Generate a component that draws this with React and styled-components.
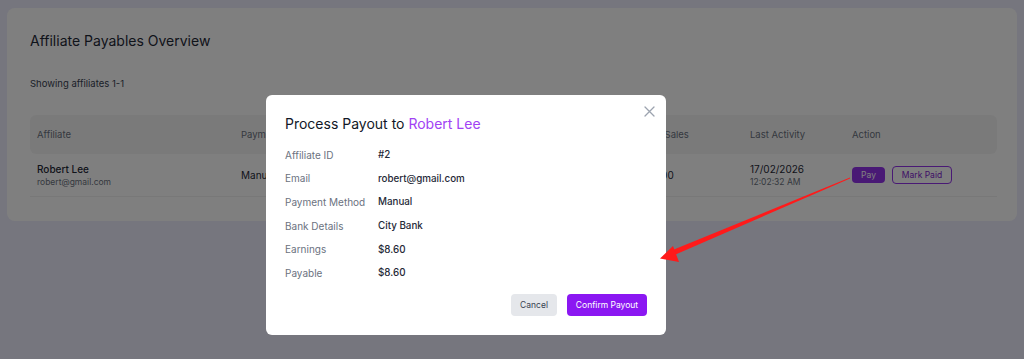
import React from "react";
import styled, { createGlobalStyle } from "styled-components";

const GlobalStyle = createGlobalStyle`
  html, body {
    margin: 0;
    padding: 0;
    background: #ededfd;
    font-family: Inter, "Noto Sans", "Liberation Sans", sans-serif;
    color: #1f2937;
  }
  * { box-sizing: border-box; }
`;

const columns = ["Affiliate", "Payment Method", "Earnings", "Payable", "Total Sales", "Last Activity", "Action"];

const details = [
  ["Affiliate ID", "#2"],
  ["Email", "robert@gmail.com"],
  ["Payment Method", "Manual"],
  ["Bank Details", "City Bank"],
  ["Earnings", "$8.60"],
  ["Payable", "$8.60"],
];

const App = () => {
  return (
    <Page>
      <GlobalStyle />
      <Card>
        <Title>Affiliate Payables Overview</Title>
        <Showing>Showing affiliates 1-1</Showing>
        <Table>
          <HeadRow>
            {columns.map((c) => (
              <HeadCell key={c}>{c}</HeadCell>
            ))}
          </HeadRow>
          <BodyRow>
            <Cell>
              <Name>Robert Lee</Name>
              <Sub>robert@gmail.com</Sub>
            </Cell>
            <Cell>
              <Strong>Manual</Strong>
            </Cell>
            <Cell>
              <Strong>$8.60</Strong>
            </Cell>
            <Cell>
              <Strong>$8.60</Strong>
            </Cell>
            <Cell>
              <Strong>$86.00</Strong>
            </Cell>
            <Cell>
              <Strong>17/02/2026</Strong>
              <Sub>12:02:32 AM</Sub>
            </Cell>
            <Actions>
              <PayButton>Pay</PayButton>
              <OutlineButton>Mark Paid</OutlineButton>
            </Actions>
          </BodyRow>
        </Table>
      </Card>

      <Overlay>
        <Modal>
          <CloseButton aria-label="Close">
            <svg width="11" height="11" viewBox="0 0 11 11">
              <path d="M1 1L10 10M10 1L1 10" stroke="#9ca3af" strokeWidth="1.3" strokeLinecap="round" />
            </svg>
          </CloseButton>
          <ModalTitle>
            Process Payout to <Accent>Robert Lee</Accent>
          </ModalTitle>
          <DetailList>
            {details.map(([label, value]) => (
              <React.Fragment key={label}>
                <DetailLabel>{label}</DetailLabel>
                <DetailValue>{value}</DetailValue>
              </React.Fragment>
            ))}
          </DetailList>
          <Footer>
            <CancelButton>Cancel</CancelButton>
            <ConfirmButton>Confirm Payout</ConfirmButton>
          </Footer>
        </Modal>
      </Overlay>

      <Arrow width="1024" height="359" viewBox="0 0 1024 359">
        <polygon points="850,177.5 850,178.5 671,256.5 669,251.5" fill="#ff1a1a" />
        <polygon points="660,258.5 673,246 679,262" fill="#ff1a1a" />
      </Arrow>
    </Page>
  );
};

export default App;

const Page = styled.div`
  position: relative;
  width: 1024px;
  height: 359px;
  padding: 8px 7px;
  overflow: hidden;
`;

const Card = styled.div`
  background: #ffffff;
  border-radius: 8px;
  padding: 23px 20px 24px 23px;
`;

const Title = styled.h2`
  margin: 0;
  font-size: 14px;
  font-weight: 400;
  color: #1f2937;
  line-height: 20px;
`;

const Showing = styled.p`
  margin: 26px 0 0;
  font-size: 9.5px;
  color: #374151;
  line-height: 14px;
`;

const Table = styled.div`
  margin-top: 24px;
`;

const gridCols = "204px 130px 130px 139px 110px 102px 1fr";

const HeadRow = styled.div`
  display: grid;
  grid-template-columns: ${gridCols};
  align-items: center;
  height: 39px;
  padding-left: 7px;
  background: #f5f5f5;
  border-radius: 6px;
`;

const HeadCell = styled.div`
  font-size: 9.5px;
  color: #6b7280;
`;

const BodyRow = styled.div`
  display: grid;
  grid-template-columns: ${gridCols};
  align-items: center;
  height: 43px;
  padding-left: 7px;
  border-bottom: 1px solid #f0f0f0;
`;

const Cell = styled.div`
  display: flex;
  flex-direction: column;
  gap: 2px;
`;

const Name = styled.span`
  font-size: 10px;
  font-weight: 500;
  color: #1f2937;
`;

const Strong = styled.span`
  font-size: 10px;
  font-weight: 400;
  color: #1f2937;
`;

const Sub = styled.span`
  font-size: 8.5px;
  color: #6b7280;
`;

const Actions = styled.div`
  display: flex;
  align-items: center;
  gap: 7px;
`;

const PayButton = styled.button`
  height: 16px;
  width: 33px;
  padding: 0;
  border: none;
  border-radius: 4px;
  background: #9333ea;
  color: #ffffff;
  font-family: inherit;
  font-size: 8.5px;
`;

const OutlineButton = styled.button`
  height: 18px;
  width: 60px;
  padding: 0;
  border: 1px solid #9333ea;
  border-radius: 4px;
  background: #ffffff;
  color: #7e22ce;
  font-family: inherit;
  font-size: 8.5px;
`;

const Overlay = styled.div`
  position: absolute;
  inset: 0;
  background: rgba(0, 0, 0, 0.5);
  padding: 95px 0 0 266px;
`;

const Modal = styled.div`
  position: relative;
  width: 400px;
  height: 240px;
  background: #ffffff;
  border-radius: 6px;
  padding: 19px;
  display: flex;
  flex-direction: column;
`;

const CloseButton = styled.button`
  position: absolute;
  top: 11px;
  right: 11px;
  border: none;
  background: none;
  padding: 0;
  display: flex;
`;

const ModalTitle = styled.h3`
  margin: 0;
  font-size: 14px;
  font-weight: 400;
  color: #111827;
  line-height: 20px;
`;

const Accent = styled.span`
  color: #a142f4;
`;

const DetailList = styled.div`
  display: grid;
  grid-template-columns: 93px 1fr;
  grid-auto-rows: 23.6px;
  align-items: center;
  margin-top: 9px;
`;

const DetailLabel = styled.span`
  font-size: 10px;
  color: #6b7280;
`;

const DetailValue = styled.span`
  font-size: 9.8px;
  font-weight: 500;
  color: #1f2937;
`;

const Footer = styled.div`
  margin-top: auto;
  display: flex;
  justify-content: flex-end;
  gap: 10px;
`;

const CancelButton = styled.button`
  height: 22px;
  width: 46px;
  padding: 0;
  border: none;
  border-radius: 4px;
  background: #e5e7eb;
  color: #374151;
  font-family: inherit;
  font-size: 8.5px;
`;

const ConfirmButton = styled.button`
  height: 22px;
  width: 80px;
  padding: 0;
  border: none;
  border-radius: 4px;
  background: #8b17f2;
  color: #ffffff;
  font-family: inherit;
  font-size: 8.5px;
  white-space: nowrap;
`;

const Arrow = styled.svg`
  position: absolute;
  top: 0;
  left: 0;
  pointer-events: none;
`;
